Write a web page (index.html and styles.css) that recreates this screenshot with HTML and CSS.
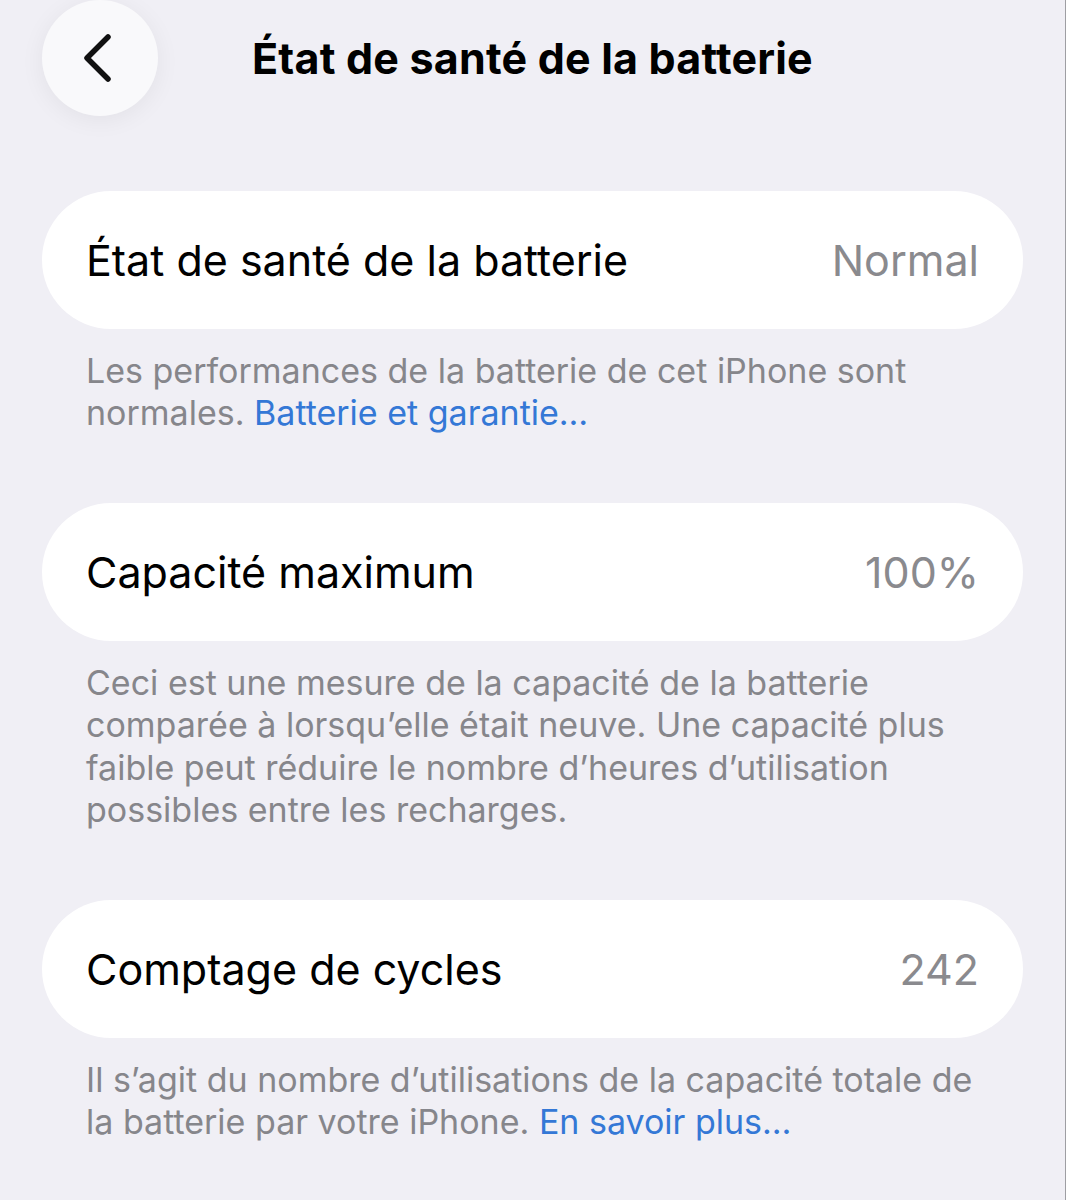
FILE: index.html
```html
<!DOCTYPE html>
<html lang="fr">
<head>
    <meta charset="UTF-8">
    <meta name="viewport" content="width=device-width, initial-scale=1.0">
    <title>État de santé de la batterie</title>
    <link rel="stylesheet" href="styles.css">
</head>
<body>
    <div class="screen">
        <div class="nav-bar">
            <button class="back-btn" aria-label="Retour">
                <svg width="34" height="50" viewBox="0 0 34 50">
                    <path d="M28 4 L7 25 L28 46" fill="none" stroke="#111" stroke-width="5.5" stroke-linecap="round" stroke-linejoin="round"/>
                </svg>
            </button>
            <h1 class="nav-title">État de santé de la batterie</h1>
        </div>

        <div class="section first">
            <div class="row">
                <span class="label">État de santé de la batterie</span>
                <span class="value">Normal</span>
            </div>
            <p class="footnote">Les performances de la batterie de cet iPhone sont normales. <a href="#">Batterie et garantie…</a></p>
        </div>

        <div class="section">
            <div class="row">
                <span class="label">Capacité maximum</span>
                <span class="value">100%</span>
            </div>
            <p class="footnote">Ceci est une mesure de la capacité de la batterie comparée à lorsqu’elle était neuve. Une capacité plus faible peut réduire le nombre d’heures d’utilisation possibles entre les recharges.</p>
        </div>

        <div class="section">
            <div class="row">
                <span class="label">Comptage de cycles</span>
                <span class="value">242</span>
            </div>
            <p class="footnote">Il s’agit du nombre d’utilisations de la capacité totale de la batterie par votre iPhone. <a href="#">En savoir plus…</a></p>
        </div>
    </div>
</body>
</html>
```

FILE: styles.css
```css
body {
  margin: 0;
  padding: 0;
  background-color: #f0eff5;
  font-family: Inter, "Noto Sans", sans-serif;
}
.screen {
  box-sizing: border-box;
  width: 1066px;
  height: 1200px;
  padding: 0 42px 0 42px;
  border-right: 1px solid #9e9ea3;
  overflow: hidden;
}
.nav-bar {
  display: flex;
  align-items: center;
  height: 116px;
  position: relative;
}
.back-btn {
  width: 116px;
  height: 116px;
  border-radius: 50%;
  border: none;
  background-color: #f9f9fb;
  box-shadow: 0 4px 24px rgba(0, 0, 0, 0.06);
  display: flex;
  align-items: center;
  justify-content: center;
  padding: 0 6px 0 0;
  cursor: pointer;
}
.nav-title {
  position: absolute;
  left: 0;
  right: 0;
  margin: 0;
  text-align: center;
  font-size: 43px;
  font-weight: 700;
  color: #000;
  letter-spacing: 0.2px;
  pointer-events: none;
}
.section {
  margin-top: 68.5px;
}
.section.first {
  margin-top: 75px;
}
.row {
  display: flex;
  align-items: center;
  justify-content: space-between;
  height: 138px;
  padding: 0 44px;
  background-color: #fff;
  border-radius: 69px;
}
.label {
  font-size: 43px;
  color: #000;
}
.value {
  font-size: 43px;
  color: #8a8a8e;
}
.footnote {
  margin: 21px 30px 0 44px;
  font-size: 34px;
  line-height: 42.3px;
  color: #86868b;
}
.footnote a {
  display: inline-block;
  color: #3478d6;
  text-decoration: none;
}
```
